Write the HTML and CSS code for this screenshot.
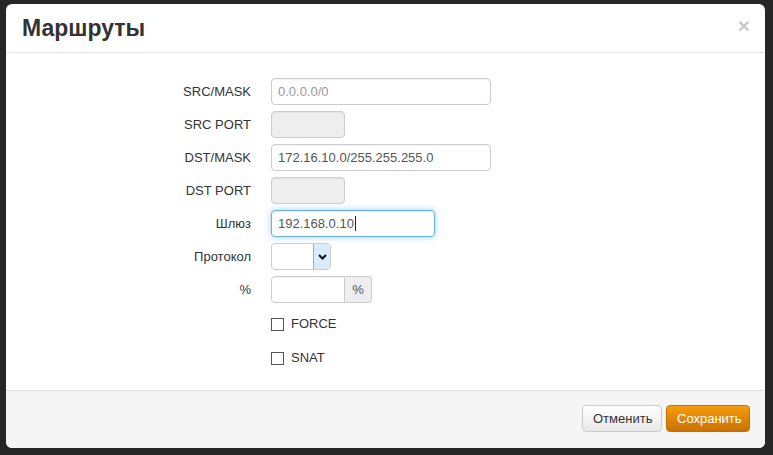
FILE: index.html
```html
<!DOCTYPE html>
<html lang="ru">
<head>
<meta charset="utf-8">
<title>Маршруты</title>
<link rel="stylesheet" href="styles.css">
</head>
<body>
<div class="modal">
  <div class="modal-header">
    <h3 class="modal-title">Маршруты</h3>
    <span class="close">×</span>
  </div>
  <div class="modal-body">
    <div class="form">
      <label class="lbl">SRC/MASK</label>
      <div class="ctl"><input class="inp w-wide" type="text" placeholder="0.0.0.0/0"></div>

      <label class="lbl">SRC PORT</label>
      <div class="ctl"><input class="inp w-port" type="text" disabled></div>

      <label class="lbl">DST/MASK</label>
      <div class="ctl"><input class="inp w-wide" type="text" value="172.16.10.0/255.255.255.0"></div>

      <label class="lbl">DST PORT</label>
      <div class="ctl"><input class="inp w-port" type="text" disabled></div>

      <label class="lbl">Шлюз</label>
      <div class="ctl"><div class="inp w-gw focus">192.168.0.10<span class="caret"></span></div></div>

      <label class="lbl">Протокол</label>
      <div class="ctl">
        <div class="select">
          <span class="select-val"></span>
          <span class="select-btn"><svg width="9" height="6" viewBox="0 0 9 6"><path d="M1 1 L4.5 4.5 L8 1" fill="none" stroke="#111" stroke-width="2"/></svg></span>
        </div>
      </div>

      <label class="lbl">%</label>
      <div class="ctl">
        <div class="group">
          <input class="inp grp-inp" type="text">
          <span class="addon">%</span>
        </div>
      </div>

      <span class="lbl"></span>
      <div class="ctl check"><span class="box"></span>FORCE</div>

      <span class="lbl"></span>
      <div class="ctl check"><span class="box"></span>SNAT</div>
    </div>
  </div>
  <div class="modal-footer">
    <button class="btn btn-default">Отменить</button>
    <button class="btn btn-primary">Сохранить</button>
  </div>
</div>
</body>
</html>
```
FILE: styles.css
```css
* { box-sizing: border-box; }
html, body { margin: 0; padding: 0; }
body {
  background: #262626;
  font-family: "Liberation Sans", Arial, sans-serif;
  font-size: 13px;
  color: #333;
  height: 455px;
  overflow: hidden;
  padding: 4px 8px 0 6px;
}
.modal {
  width: 759px;
  height: 444px;
  background: #fff;
  border-radius: 6px;
  display: flex;
  flex-direction: column;
  overflow: hidden;
}
.modal-header {
  height: 49px;
  border-bottom: 1px solid #e5e5e5;
  display: flex;
  align-items: center;
  justify-content: space-between;
  padding: 0 15px 0 16px;
}
.modal-title {
  margin: 0;
  font-size: 23px;
  font-weight: bold;
  color: #333;
  line-height: 1;
  padding-top: 1px;
}
.close {
  font-size: 21px;
  font-weight: bold;
  color: #c9c9c9;
  line-height: 1;
  margin-top: -5px;
}
.modal-body {
  flex: 1;
  padding-top: 25px;
}
.form {
  display: grid;
  grid-template-columns: 245px auto;
  column-gap: 20px;
  row-gap: 6px;
}
.lbl {
  text-align: right;
  align-self: center;
  color: #333;
}
.ctl {
  display: flex;
  align-items: center;
  height: 27px;
}
.inp {
  height: 27px;
  border: 1px solid #ccc;
  border-radius: 4px;
  padding: 0 6px;
  font-family: "Liberation Sans", Arial, sans-serif;
  font-size: 13px;
  color: #555;
  background: #fff;
  outline: none;
  box-shadow: inset 0 1px 1px rgba(0,0,0,0.04);
}
.inp::placeholder { color: #999; }
.inp:disabled { background: #eee; }
.w-wide { width: 220px; }
.w-port { width: 74px; }
.w-gw {
  width: 164px;
  display: flex;
  align-items: center;
}
.focus {
  border-color: #66afe9;
  box-shadow: inset 0 1px 1px rgba(0,0,0,0.075), 0 0 6px rgba(102,175,233,0.6);
}
.caret {
  display: inline-block;
  width: 1px;
  height: 15px;
  background: #222;
  margin-left: 1px;
}
.select {
  width: 60px;
  height: 27px;
  border: 1px solid #ccc;
  border-radius: 4px;
  display: flex;
  overflow: hidden;
}
.select-val { flex: 1; }
.select-btn {
  width: 17px;
  background: #dcebfc;
  border-left: 1px solid #7eb4ea;
  display: flex;
  align-items: center;
  justify-content: center;
}
.group {
  display: flex;
  height: 27px;
}
.grp-inp {
  width: 74px;
  border-radius: 4px 0 0 4px;
}
.addon {
  width: 27px;
  height: 27px;
  background: #eee;
  border: 1px solid #ccc;
  border-left: none;
  border-radius: 0 4px 4px 0;
  display: flex;
  align-items: center;
  justify-content: center;
  color: #555;
  font-size: 13px;
}
.check {
  margin-top: 1px;
  height: 27px;
  color: #333;
}
.check .box {
  width: 13px;
  height: 13px;
  border: 1px solid #555;
  background: #fff;
  margin-right: 7px;
  margin-top: 2px;
}
.modal-footer {
  height: 58px;
  background: #f5f5f5;
  border-top: 1px solid #ddd;
  display: flex;
  justify-content: flex-end;
  align-items: flex-start;
  gap: 4px;
  padding: 14px 15px 0 0;
}
.btn {
  height: 27px;
  border-radius: 4px;
  font-family: "Liberation Sans", Arial, sans-serif;
  font-size: 13px;
  padding: 0 10px;
  cursor: pointer;
}
.btn-default {
  width: 80px;
  color: #333;
  background: linear-gradient(#fff, #e8e8e8);
  border: 1px solid #ccc;
}
.btn-primary {
  width: 84px;
  color: #fff;
  background: linear-gradient(#f69c0e, #c97200);
  border: 1px solid #c27000;
}
```
